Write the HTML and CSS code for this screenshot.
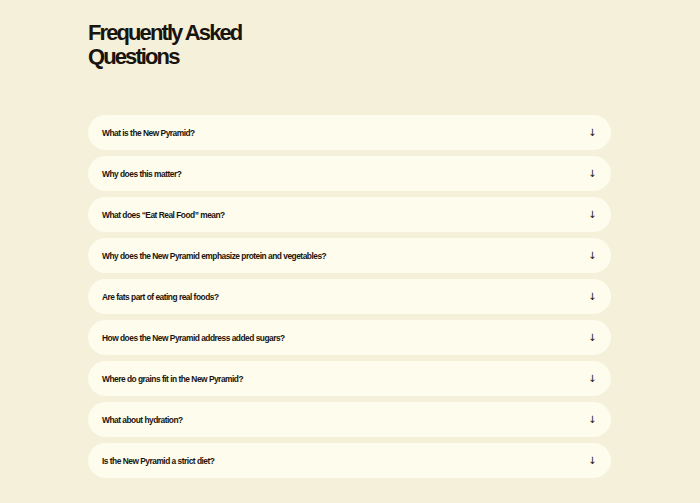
FILE: index.html
```html
<!DOCTYPE html>
<html lang="en">
<head>
    <meta charset="UTF-8">
    <meta name="viewport" content="width=device-width, initial-scale=1.0">
    <title>FAQ</title>
    <link rel="stylesheet" href="styles.css">
</head>
<body>
    <section class="faq">
        <h1>Frequently Asked<br>Questions</h1>

        <div class="faq-list">
            <button class="faq-item"><span>What is the New Pyramid?</span><i class="arrow">&#8595;</i></button>
            <button class="faq-item"><span>Why does this matter?</span><i class="arrow">&#8595;</i></button>
            <button class="faq-item"><span>What does &ldquo;Eat Real Food&rdquo; mean?</span><i class="arrow">&#8595;</i></button>
            <button class="faq-item"><span>Why does the New Pyramid emphasize protein and vegetables?</span><i class="arrow">&#8595;</i></button>
            <button class="faq-item"><span>Are fats part of eating real foods?</span><i class="arrow">&#8595;</i></button>
            <button class="faq-item"><span>How does the New Pyramid address added sugars?</span><i class="arrow">&#8595;</i></button>
            <button class="faq-item"><span>Where do grains fit in the New Pyramid?</span><i class="arrow">&#8595;</i></button>
            <button class="faq-item"><span>What about hydration?</span><i class="arrow">&#8595;</i></button>
            <button class="faq-item"><span>Is the New Pyramid a strict diet?</span><i class="arrow">&#8595;</i></button>
        </div>
    </section>
</body>
</html>
```

FILE: styles.css
```css
body {
    margin: 0;
    background-color: #f4f0d9;
    color: #1a140f;
    font-family: "Liberation Sans", Arial, sans-serif;
}

.faq {
    width: 523px;
    padding: 21px 0 0 88px;
}

h1 {
    margin: 0 0 46px;
    font-size: 22px;
    line-height: 24px;
    font-weight: 700;
    letter-spacing: -1.9px;
}

.faq-list {
    display: flex;
    flex-direction: column;
    gap: 6px;
}

.faq-item {
    display: flex;
    align-items: center;
    justify-content: space-between;
    height: 35px;
    padding: 0 14px;
    border: none;
    border-radius: 18px;
    background-color: #fdfced;
    color: inherit;
    font-family: inherit;
    font-size: 8.4px;
    font-weight: 700;
    letter-spacing: -0.5px;
    text-align: left;
    cursor: pointer;
}

.arrow {
    font-family: "DejaVu Sans", sans-serif;
    font-style: normal;
    font-size: 10px;
    font-weight: 400;
    color: #1a140f;
    margin-right: 1px;
}
```
